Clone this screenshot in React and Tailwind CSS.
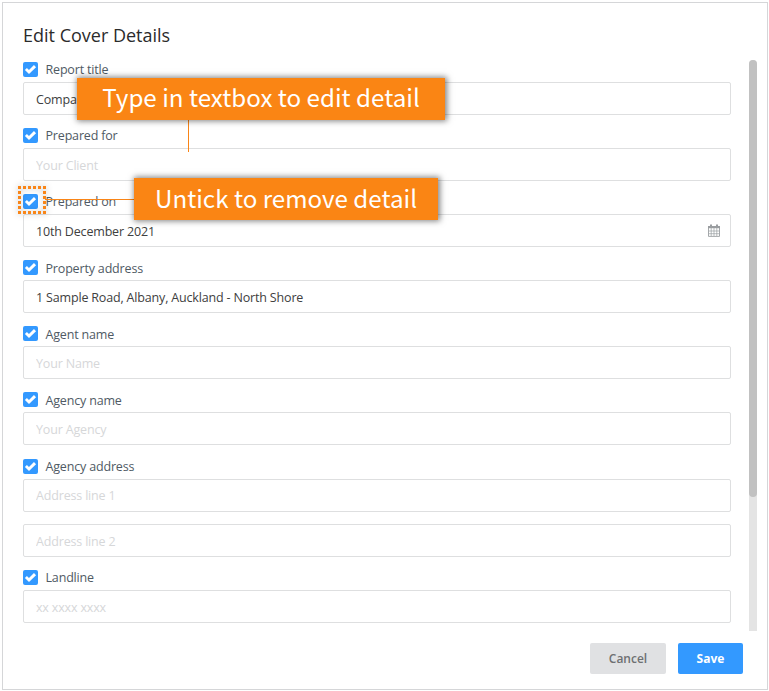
import React, { useState } from 'react';

const initialFields = [
  { id: 'title', label: 'Report title', lines: [{ value: 'Comparative Market Analysis', placeholder: 'Report title' }] },
  { id: 'client', label: 'Prepared for', lines: [{ value: '', placeholder: 'Your Client' }] },
  { id: 'date', label: 'Prepared on', lines: [{ value: '10th December 2021', placeholder: 'Date' }], calendar: true },
  { id: 'property', label: 'Property address', lines: [{ value: '1 Sample Road, Albany, Auckland - North Shore', placeholder: 'Address' }] },
  { id: 'agent', label: 'Agent name', lines: [{ value: '', placeholder: 'Your Name' }] },
  { id: 'agency', label: 'Agency name', lines: [{ value: '', placeholder: 'Your Agency' }] },
  {
    id: 'address',
    label: 'Agency address',
    lines: [
      { value: '', placeholder: 'Address line 1' },
      { value: '', placeholder: 'Address line 2' }
    ]
  },
  { id: 'landline', label: 'Landline', lines: [{ value: '', placeholder: 'xx xxxx xxxx' }] }
];

const CheckIcon = () => (
  <svg viewBox="0 0 15 15" className="block size-[15px]" fill="none" stroke="#fff" strokeWidth="2.9">
    <path d="M2.9 7 L6 10 L12 4.1" />
  </svg>
);

const CalendarIcon = () => (
  <svg viewBox="0 0 12 13" className="h-[13px] w-3" fill="none" stroke="#9a9da0">
    <path d="M0.5 3 V12.4 H11.5 V3" strokeWidth="0.9" />
    <path d="M0 3.1 H12" strokeWidth="2.2" />
    <path d="M3 0.6 V3.6 M9 0.6 V3.6" strokeWidth="2" />
    <path d="M3.2 4 V12 M6 4 V12 M8.8 4 V12 M1 7 H11 M1 9.7 H11" strokeWidth="0.7" />
  </svg>
);

const Field = ({ field, checked, onToggle, highlight }) => (
  <div className="mb-[13.1px]">
    <div className="relative flex h-[15px] items-center">
      <button
        type="button"
        role="checkbox"
        aria-checked={checked}
        aria-label={field.label}
        onClick={onToggle}
        className={`size-[15px] shrink-0 rounded-[2px] ${checked ? 'bg-[#3399ff]' : 'border border-[#d9d9d9] bg-white'}`}
      >
        {checked && <CheckIcon />}
      </button>
      <span className="ml-[7.5px] pt-[0.5px] text-[12.5px] leading-[15px] tracking-[-0.17px] whitespace-nowrap text-[#4f5a64]">{field.label}</span>
      {highlight && (
        <>
          <svg className="absolute -top-[8.5px] -left-[5px] h-[28px] w-[28px] drop-shadow-[0_0_3px_rgba(0,0,0,0.3)]" fill="none">
            <rect x="1.5" y="1.5" width="25" height="25" stroke="#f98517" strokeWidth="3" strokeDasharray="3 2" strokeDashoffset="1.5" />
          </svg>
          <span className="absolute top-[5px] left-[22px] h-px w-[90px] bg-[#f98517]" />
        </>
      )}
    </div>
    <div className="mt-[5px] flex flex-col gap-[12.2px]">
      {field.lines.map(line => (
        <div key={line.placeholder} className="flex h-[33px] items-center rounded-[2px] border border-[#dedfe0] bg-white pr-[10px] pl-3">
          <input
            type="text"
            defaultValue={line.value}
            placeholder={line.placeholder}
            className="h-full min-w-0 flex-1 pt-[1.5px] text-[12.5px] tracking-[-0.17px] text-[#404040] outline-none placeholder:text-[#d6d7d9]"
          />
          {field.calendar && <CalendarIcon />}
        </div>
      ))}
    </div>
  </div>
);

const App = () => {
  const [unticked, setUnticked] = useState([]);

  const toggle = (id) => {
    setUnticked(prev => (prev.includes(id) ? prev.filter(x => x !== id) : [...prev, id]));
  };

  return (
    <div className="relative h-[691px] w-[769px] overflow-hidden bg-white pt-[2px] pl-[2px] font-['Open_Sans',sans-serif]">
      <div className="flex h-[688px] w-[766px] flex-col border border-[#d5d6d8] bg-white pl-5">
        <h1 className="h-[57px] pt-[20px] text-[18px] leading-6 font-medium text-[#2b2b2b]">Edit Cover Details</h1>

        {/* Scrollable field list */}
        <div className="flex h-[571px] shrink-0">
          <div className="w-[707.5px] pt-[2px]">
            {initialFields.map(field => (
              <Field
                key={field.id}
                field={field}
                checked={!unticked.includes(field.id)}
                onToggle={() => toggle(field.id)}
                highlight={field.id === 'date'}
              />
            ))}
          </div>
          <div className="ml-[18px] w-[8.5px] rounded-t-[4px] bg-[#e4e4e4]">
            <div className="h-[437px] rounded-[4px] bg-[#c1c1c1]" />
          </div>
        </div>

        {/* Footer */}
        <div className="mt-3 flex justify-end gap-3 pr-[24px]">
          <button className="h-[31px] w-[76px] rounded-[2px] bg-[#e0e1e3] text-[12px] font-semibold text-[#6e7072]">Cancel</button>
          <button className="h-[31px] w-[65px] rounded-[2px] bg-[#3399ff] text-[12px] font-bold text-white">Save</button>
        </div>
      </div>

      {/* Callouts */}
      <div className="absolute top-[120px] left-[188px] h-8 w-px bg-[#f98517]" />
      <div className="absolute top-[78px] left-[77px] flex h-[42px] w-[368px] items-center justify-center bg-[#fa8514] pb-[4px] font-['Noto_Sans_CJK_SC',sans-serif] text-[24.15px] leading-none whitespace-nowrap text-white shadow-[1px_0_6px_1px_rgba(0,0,0,0.5)]">
        Type in textbox to edit detail
      </div>
      <div className="absolute top-[178px] left-[134px] flex h-[42px] w-[304px] items-center justify-center bg-[#fa8514] pb-[2px] font-['Noto_Sans_CJK_SC',sans-serif] text-[24.15px] leading-none whitespace-nowrap text-white shadow-[1px_0_6px_1px_rgba(0,0,0,0.5)]">
        Untick to remove detail
      </div>
    </div>
  );
};

export default App;
